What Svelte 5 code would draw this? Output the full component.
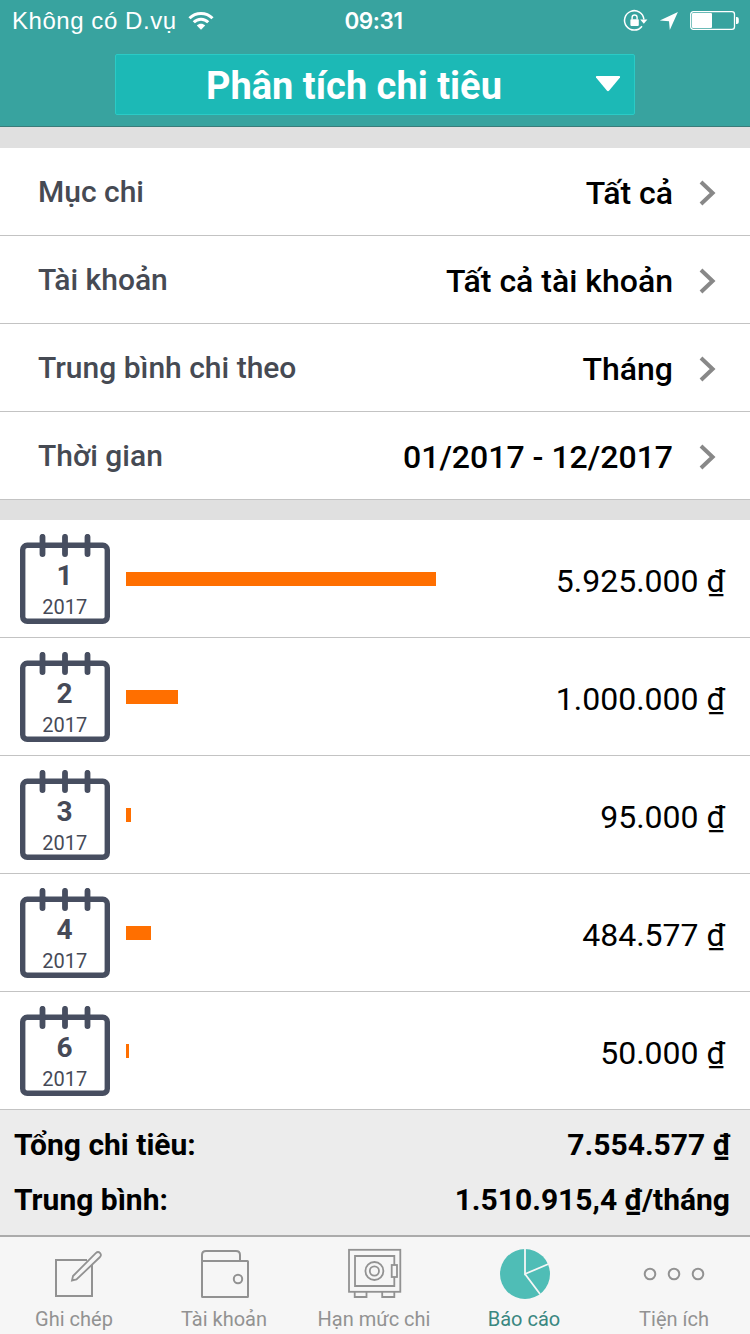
<script>
	const BAR_MAX_PX = 310;

	const filters = [
		{ label: 'Mục chi', value: 'Tất cả' },
		{ label: 'Tài khoản', value: 'Tất cả tài khoản' },
		{ label: 'Trung bình chi theo', value: 'Tháng' },
		{ label: 'Thời gian', value: '01/2017 - 12/2017' }
	];

	const months = [
		{ month: 1, year: 2017, amount: 5925000 },
		{ month: 2, year: 2017, amount: 1000000 },
		{ month: 3, year: 2017, amount: 95000 },
		{ month: 4, year: 2017, amount: 484577 },
		{ month: 6, year: 2017, amount: 50000 }
	];

	const tabs = [
		{ id: 'note', label: 'Ghi chép' },
		{ id: 'wallet', label: 'Tài khoản' },
		{ id: 'safe', label: 'Hạn mức chi' },
		{ id: 'report', label: 'Báo cáo' },
		{ id: 'more', label: 'Tiện ích' }
	];

	let activeTab = $state('report');

	const total = months.reduce((sum, m) => sum + m.amount, 0);
	const average = total / months.length;
	const highest = Math.max(...months.map((m) => m.amount));

	function formatMoney(value) {
		const [whole, fraction] = String(value).split('.');
		const grouped = whole.replace(/\B(?=(\d{3})+$)/g, '.');
		return fraction ? `${grouped},${fraction}` : grouped;
	}

	function barWidth(amount) {
		return Math.round((amount / highest) * BAR_MAX_PX);
	}
</script>

<div class="screen">
	<header>
		<div class="status">
			<div class="carrier">
				<span>Không có D.vụ</span>
				<svg width="26" height="20" viewBox="0 0 26 20">
					<g fill="none" stroke="#fff" stroke-width="3">
						<path d="M1.5 7.2C7.8 .8 18.2 .8 24.5 7.2" />
						<path d="M5.8 11.3C9.8 7.2 16.2 7.2 20.2 11.3" />
					</g>
					<path d="M13 18.8L8.8 14.4C11.2 12.2 14.8 12.2 17.2 14.4Z" fill="#fff" />
				</svg>
			</div>
			<span class="clock">09:31</span>
			<div class="indicators">
				<svg width="24" height="22" viewBox="0 0 24 22">
					<path d="M19 16.2A9.7 9.7 0 1 1 20.9 9.5" fill="none" stroke="#fff" stroke-width="1.5" />
					<path d="M17.2 9.6H24.4L20.8 13.8Z" fill="#fff" />
					<rect x="7.4" y="9.3" width="8.4" height="6.6" rx=".8" fill="#fff" />
					<path d="M9.1 9.5V7.5a2.5 2.5 0 0 1 5 0v2" fill="none" stroke="#fff" stroke-width="1.4" />
				</svg>
				<svg width="19" height="18" viewBox="0 0 19 18">
					<path d="M18.9 .1L.8 8.4L10 9.2L10.8 18Z" fill="#fff" />
				</svg>
				<svg width="49" height="19" viewBox="0 0 49 19">
					<rect x=".7" y=".7" width="43.8" height="17.6" rx="2.6" fill="none" stroke="#fff" stroke-width="1.3" />
					<rect x="2" y="2" width="20" height="15" rx="1" fill="#fff" />
					<path d="M46 6h.8a2 2 0 0 1 2 2v3a2 2 0 0 1-2 2H46z" fill="#fff" />
				</svg>
			</div>
		</div>
		<button class="picker">
			<span>Phân tích chi tiêu</span>
			<svg width="26" height="16" viewBox="0 0 26 16">
				<path d="M1.5 0H24.5Q25.5 .5 25 1.5L14.2 14.5Q13 15.8 11.8 14.5L1 1.5Q.5 .5 1.5 0Z" fill="#fff" />
			</svg>
		</button>
	</header>

	<section class="filters">
		{#each filters as filter (filter.label)}
			<div class="filter">
				<span class="label">{filter.label}</span>
				<span class="value">{filter.value}</span>
				<svg width="18" height="26" viewBox="0 0 18 26">
					<path d="M2 2L13.6 13L2 24" fill="none" stroke="#888" stroke-width="4" />
				</svg>
			</div>
		{/each}
	</section>

	<section class="months">
		{#each months as item (item.month)}
			<div class="month">
				<svg class="calendar" width="90" height="90" viewBox="0 0 90 90">
					<rect x="2.7" y="11.3" width="84.6" height="76" rx="4.5" fill="none" stroke="#474e60" stroke-width="5.4" />
					<path d="M22.5 2.8V20M45 2.8V20M67.5 2.8V20" stroke="#474e60" stroke-width="5.8" stroke-linecap="round" />
					<text class="number" x="44.5" y="51" text-anchor="middle">{item.month}</text>
					<text class="year" x="44.7" y="80" text-anchor="middle">{item.year}</text>
				</svg>
				<div class="bar" style:width="{barWidth(item.amount)}px"></div>
				<span class="amount">{formatMoney(item.amount)} ₫</span>
			</div>
		{/each}
	</section>

	<section class="summary">
		<div class="sum-row">
			<span class="sum-label">Tổng chi tiêu:</span>
			<span class="sum-value">{formatMoney(total)} ₫</span>
		</div>
		<div class="sum-row">
			<span class="sum-label">Trung bình:</span>
			<span class="sum-value">{formatMoney(average)} ₫/tháng</span>
		</div>
	</section>

	<nav>
		{#each tabs as tab (tab.id)}
			<button class="tab" class:active={tab.id === activeTab} onclick={() => (activeTab = tab.id)}>
				<svg width="64" height="52" viewBox="0 0 64 52" fill="none" stroke="#929292" stroke-width="2">
					{#if tab.id === 'note'}
						<path d="M45 12H14V48H50V17" />
						<path d="M30 32.5L31 28L53.8 5.2Q56 3 58 5Q59.8 7 58 9L34.5 31.5Z" stroke-width="1.8" />
					{:else if tab.id === 'wallet'}
						<rect x="10" y="13" width="46" height="36" rx=".5" />
						<path d="M10 13V7Q10 3 14 3H44Q48 3 48 7V13" />
						<circle cx="46" cy="31" r="4.2" />
					{:else if tab.id === 'safe'}
						<g stroke-width="1.8">
							<rect x="7" y="1.8" width="51.3" height="42" />
							<path d="M52.3 17V8H13V38H52.3V29" />
							<circle cx="32.4" cy="23" r="9" />
							<circle cx="32.4" cy="23" r="4.6" />
							<rect x="49.7" y="17" width="5.3" height="12" />
							<path d="M12.7 44V49H24.5V44M40.2 44V49H52.3V44" />
						</g>
					{:else if tab.id === 'report'}
						<circle cx="33" cy="26" r="25" fill="#4fbdb6" stroke="none" />
						<path d="M33 1V26L56.5 16M33 26L48 46" stroke="#f6f6f6" stroke-width="1.8" />
					{:else}
						<circle cx="8" cy="26" r="5.3" />
						<circle cx="32" cy="26" r="5.3" />
						<circle cx="56" cy="26" r="5.3" />
					{/if}
				</svg>
				<span>{tab.label}</span>
			</button>
		{/each}
	</nav>
</div>

<style>
	:global(body) {
		background: #e0e0e0;
	}

	.screen {
		display: flex;
		flex-direction: column;
		width: 750px;
		height: 1334px;
		overflow: hidden;
		background: #e0e0e0;
		font-family: Roboto, sans-serif;
		color: #000;
	}

	button {
		padding: 0;
		border: 0;
		border-radius: 0;
		background: none;
		font: inherit;
	}

	svg {
		display: block;
		flex: none;
	}

	header {
		box-sizing: border-box;
		height: 127px;
		border-bottom: 1px solid #3a7c7a;
		background: #38a39f;
		color: #fff;
	}

	.status {
		display: grid;
		grid-template-columns: 1fr auto 1fr;
		align-items: center;
		box-sizing: border-box;
		height: 41px;
		padding: 0 11px 0 12px;
		font-family: "Liberation Sans", sans-serif;
		font-size: 24px;
	}

	.carrier,
	.indicators {
		display: flex;
		align-items: center;
	}

	.carrier {
		gap: 11px;
		letter-spacing: 0.55px;
	}

	.clock {
		margin-right: 4px;
		font-family: Inter, sans-serif;
		font-size: 22.5px;
		font-weight: 600;
		letter-spacing: -0.4px;
	}

	.indicators {
		justify-content: flex-end;
		gap: 12px;
	}

	.indicators svg {
		overflow: visible;
	}

	.picker {
		display: flex;
		align-items: center;
		justify-content: space-between;
		box-sizing: border-box;
		width: 520px;
		height: 61px;
		margin: 13px 0 0 115px;
		padding: 0 13px 0 90px;
		border: 1px solid #2acbc6;
		border-radius: 2px;
		background: #1cb9b6;
		color: #fff;
		font-size: 38px;
		font-weight: 700;
	}

	.picker span {
		padding-top: 3px;
	}

	.picker svg {
		margin-bottom: 2px;
	}

	.filters {
		margin-top: 21px;
	}

	.filter {
		display: flex;
		align-items: center;
		box-sizing: border-box;
		height: 88px;
		padding: 0 33px 0 38px;
		border-bottom: 1px solid #c3c3c3;
		background: #fff;
	}

	.filter svg {
		margin-top: 2px;
	}

	.label {
		flex: 1;
		color: #464a53;
		font-size: 30px;
		font-weight: 500;
	}

	.value {
		margin-right: 26px;
		padding-top: 2px;
		font-size: 32px;
		font-weight: 500;
	}

	.months {
		margin-top: 20px;
	}

	.month {
		display: flex;
		align-items: center;
		box-sizing: border-box;
		height: 118px;
		padding: 0 25px 0 20px;
		border-bottom: 1px solid #c3c3c3;
		background: #fff;
	}

	.calendar {
		margin-right: 16px;
	}

	.number,
	.year {
		fill: #464a57;
	}

	.number {
		font-size: 28px;
		font-weight: 700;
	}

	.year {
		font-size: 20px;
	}

	.bar {
		height: 14px;
		background: #ff6f00;
	}

	.amount {
		margin-left: auto;
		padding-top: 4px;
		font-size: 32px;
	}

	.summary {
		box-sizing: border-box;
		height: 127px;
		padding: 7px 20px 0 14px;
		border-bottom: 2px solid #ababab;
		background: #ececec;
	}

	.sum-row {
		display: flex;
		align-items: center;
		justify-content: space-between;
		height: 55px;
		font-size: 30px;
		font-weight: 700;
	}

	nav {
		display: flex;
		flex: 1;
		background: #f6f6f6;
	}

	.tab {
		display: flex;
		flex: 1;
		flex-direction: column;
		align-items: center;
		padding: 11px 2px 0 0;
		color: #929292;
		font-size: 20px;
	}

	.tab span {
		margin-top: 7px;
	}

	.active {
		color: #3a8781;
	}
</style>
